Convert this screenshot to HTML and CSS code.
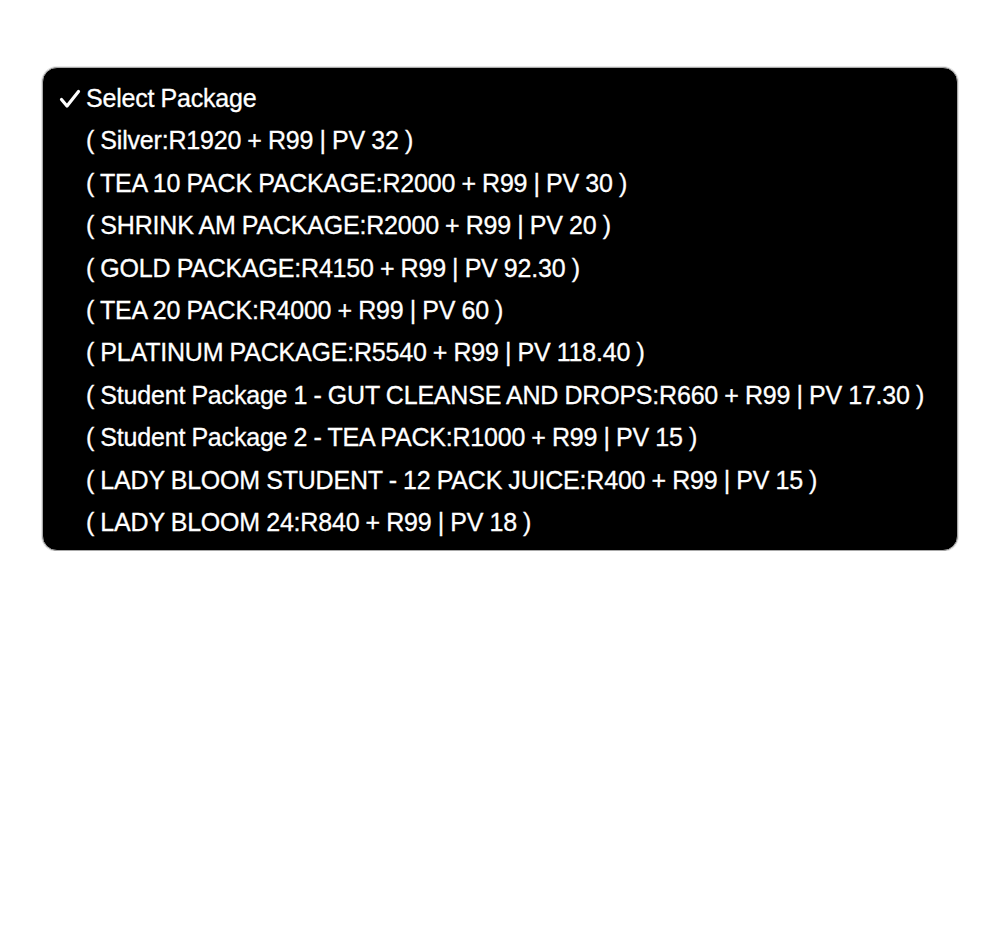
FILE: index.html
```html
<!DOCTYPE html>
<html>
<head>
<meta charset="utf-8">
<link rel="stylesheet" href="styles.css">
</head>
<body>
<div class="menu">
  <div class="item selected"><svg class="check" width="22" height="20" viewBox="0 0 22 20"><path d="M2.5 10.5 L8 17 L19.5 2.5" fill="none" stroke="#fff" stroke-width="3.2" stroke-linecap="round" stroke-linejoin="round"/></svg>Select Package</div>
  <div class="item">( Silver:R1920 + R99 | PV 32 )</div>
  <div class="item">( TEA 10 PACK PACKAGE:R2000 + R99 | PV 30 )</div>
  <div class="item">( SHRINK AM PACKAGE:R2000 + R99 | PV 20 )</div>
  <div class="item">( GOLD PACKAGE:R4150 + R99 | PV 92.30 )</div>
  <div class="item">( TEA 20 PACK:R4000 + R99 | PV 60 )</div>
  <div class="item">( PLATINUM PACKAGE:R5540 + R99 | PV 118.40 )</div>
  <div class="item">( Student Package 1 - GUT CLEANSE AND DROPS:R660 + R99 | PV 17.30 )</div>
  <div class="item">( Student Package 2 - TEA PACK:R1000 + R99 | PV 15 )</div>
  <div class="item">( LADY BLOOM STUDENT - 12 PACK JUICE:R400 + R99 | PV 15 )</div>
  <div class="item">( LADY BLOOM 24:R840 + R99 | PV 18 )</div>
</div>
</body>
</html>
```
FILE: styles.css
```css
html, body {
  margin: 0;
  padding: 0;
  background: #fff;
}
body {
  padding: 67px 42px 0 42px;
  font-family: "Liberation Sans", Arial, sans-serif;
}
.menu {
  width: 916px;
  box-sizing: border-box;
  background: #000;
  border: 1.5px solid #a8a8a8;
  border-radius: 15px;
  padding: 9px 0 7px 0;
  box-shadow: 0 0 0 1px #e6e6e6;
}
.item {
  color: #fff;
  font-size: 25px;
  letter-spacing: -0.2px;
  word-spacing: -0.5px;
  line-height: 42.4px;
  height: 42.4px;
  padding-left: 43px;
  position: relative;
  white-space: nowrap;
  -webkit-text-stroke: 0.3px #fff;
}
.check {
  position: absolute;
  left: 16px;
  top: 12px;
}
```
